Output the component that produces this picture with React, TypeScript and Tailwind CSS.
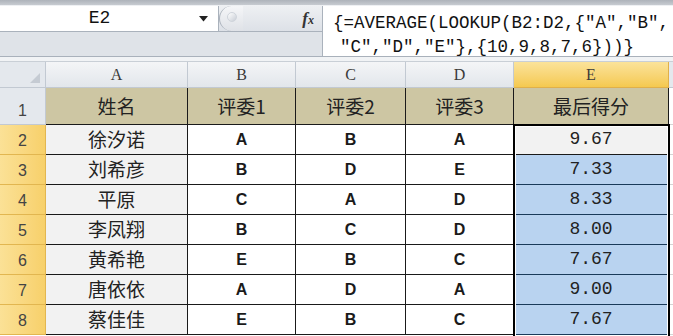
import React from "react";

const rows = [
  { name: "徐汐诺", b: "A", c: "B", d: "A", e: "9.67" },
  { name: "刘希彦", b: "B", c: "D", d: "E", e: "7.33" },
  { name: "平原", b: "C", c: "A", d: "D", e: "8.33" },
  { name: "李凤翔", b: "B", c: "C", d: "D", e: "8.00" },
  { name: "黄希艳", b: "E", c: "B", d: "C", e: "7.67" },
  { name: "唐依依", b: "A", c: "D", d: "A", e: "9.00" },
  { name: "蔡佳佳", b: "E", c: "B", d: "C", e: "7.67" },
];

const cjk = "font-['Noto_Sans_CJK_SC',sans-serif]";
const mono = "font-['Liberation_Mono','Noto_Sans_CJK_SC',monospace]";

const ColHead: React.FC<{ label: string; active?: boolean }> = ({ label, active }) => (
  <div
    className={
      active
        ? "flex items-center justify-center border-r border-b border-[#e0b04a] bg-gradient-to-b from-[#fbe39a] to-[#f5c94e] font-['Liberation_Serif',serif] text-[16px] text-[#3a3a3a]"
        : "flex items-center justify-center border-r border-b border-[#c2c9d2] bg-gradient-to-b from-[#f4f5f7] to-[#e2e6eb] font-['Liberation_Serif',serif] text-[16px] text-[#3a3a3a]"
    }
  >
    {label}
  </div>
);

const RowHead: React.FC<{ n: number }> = ({ n }) => (
  <div
    className={
      n === 1
        ? "flex items-end justify-center pb-[1px] border-r border-b border-[#c2c9d2] bg-[#e4e8ed] font-['Liberation_Sans',sans-serif] text-[16px] text-[#444]"
        : "flex items-end justify-center pb-[1px] border-r border-b border-[#e2b650] bg-gradient-to-r from-[#fbe196] to-[#f7d06a] font-['Liberation_Sans',sans-serif] text-[16px] text-[#444]"
    }
  >
    {n}
  </div>
);

export default function App() {
  return (
    <div className="w-[673px] h-[336px] overflow-hidden bg-white flex flex-col select-none">
      {/* formula bar */}
      <div className="h-[6px] bg-gradient-to-b from-[#aeb3ba] to-[#c7cbd1] border-b border-[#eef0f3]" />
      <div className="h-[51px] flex bg-[#dfe3e8] border-b border-[#a9b1bb]">
        <div className="w-[322px] flex flex-col">
          <div className="h-[26px] flex border-b border-[#aab2bc]">
            <div className="w-[219px] bg-white flex items-center border-r border-[#aab2bc]">
              <div className={`flex-1 text-center text-[18px] text-[#111] ${mono}`}>E2</div>
              <svg width="9" height="6" viewBox="0 0 9 6" className="mr-[10px]">
                <path d="M0 0 L9 0 L4.5 5.5 Z" fill="#222" />
              </svg>
            </div>
            <div className="flex-1 flex items-center bg-gradient-to-b from-[#eef0f3] to-[#dde1e7]">
              <div className="w-[24px] h-[25px] rounded-l-full border-l border-[#a9b0ba] bg-gradient-to-b from-[#f5f6f8] to-[#dfe2e7] flex items-center justify-center">
                <div className="w-[10px] h-[10px] rounded-full bg-gradient-to-br from-[#ffffff] to-[#c9ced6] border border-[#cfd4db] -mt-[3px]" />
              </div>
              <div className="flex-1" />
              <div className="mr-[8px] font-['Liberation_Serif',serif] italic font-bold text-[17px] text-[#333] leading-none">
                f<span className="text-[12px]">x</span>
              </div>
            </div>
          </div>
          <div className="flex-1 bg-[#dfe3e8]" />
        </div>
        <div className="flex-1 bg-white border-l border-[#aab2bc] pl-[10px] pt-[4px]">
          <div className={`text-[17.5px] leading-[26px] text-[#111] whitespace-nowrap ${mono}`}>
            {'{=AVERAGE(LOOKUP(B2:D2,{"A","B",'}
          </div>
          <div className={`pl-[7px] text-[17.5px] leading-[22px] text-[#111] whitespace-nowrap ${mono}`}>
            {'"C","D","E"},{10,9,8,7,6}))}'}
          </div>
        </div>
      </div>
      <div className="h-[5px] bg-[#f1f3f5] border-b border-[#c9cfd6]" />

      {/* sheet */}
      <div className="relative flex-1">
        <div className="grid grid-cols-[46px_142px_108px_110px_108px_155px_4px] grid-rows-[26px_37px_repeat(7,30px)]">
          <div className="relative border-r border-b border-[#c2c9d2] bg-[#e4e8ed]">
            <svg width="10" height="10" viewBox="0 0 10 10" className="absolute right-[5px] bottom-[4px]">
              <path d="M10 0 L10 10 L0 10 Z" fill="#c5cbd3" />
            </svg>
          </div>
          <ColHead label="A" />
          <ColHead label="B" />
          <ColHead label="C" />
          <ColHead label="D" />
          <ColHead label="E" active />
          <div className="border-b border-[#c2c9d2] bg-[#e4e8ed]" />

          <RowHead n={1} />
          {["姓名", "评委1", "评委2", "评委3", "最后得分"].map((h) => (
            <div
              key={h}
              className={`flex items-center justify-center bg-[#cdc6a3] border-r border-b border-[#1a1a1a] text-[19px] text-[#222] ${cjk}`}
            >
              {h}
            </div>
          ))}
          <div className="bg-white border-b border-[#d4d4d4]" />

          {rows.map((r, i) => (
            <React.Fragment key={r.name}>
              <RowHead n={i + 2} />
              <div className={`flex items-center justify-center bg-[#f2f2f2] border-r border-b border-[#1a1a1a] text-[19px] text-[#222] ${cjk}`}>
                {r.name}
              </div>
              {[r.b, r.c, r.d].map((v, j) => (
                <div
                  key={j}
                  className="flex items-center justify-center bg-white border-r border-b border-[#1a1a1a] font-['Liberation_Sans',sans-serif] font-bold text-[16px] text-[#1a1a1a]"
                >
                  {v}
                </div>
              ))}
              <div
                className={
                  i === 0
                    ? `flex items-center justify-center bg-[#f2f2f2] border-r border-b border-[#1a1a1a] text-[18px] text-[#222] ${mono}`
                    : `flex items-center justify-center bg-[#b9d3f0] border-r border-b border-[#1a3a5a] text-[18px] text-[#222] ${mono}`
                }
              >
                {r.e}
              </div>
              <div className="bg-white border-b border-[#d4d4d4]" />
            </React.Fragment>
          ))}
        </div>

        {/* selection E2:E8 */}
        <div className="absolute left-[513px] top-[62px] w-[157px] h-[215px] border-2 border-black shadow-[inset_0_0_0_1px_white] pointer-events-none" />
      </div>
    </div>
  );
}
